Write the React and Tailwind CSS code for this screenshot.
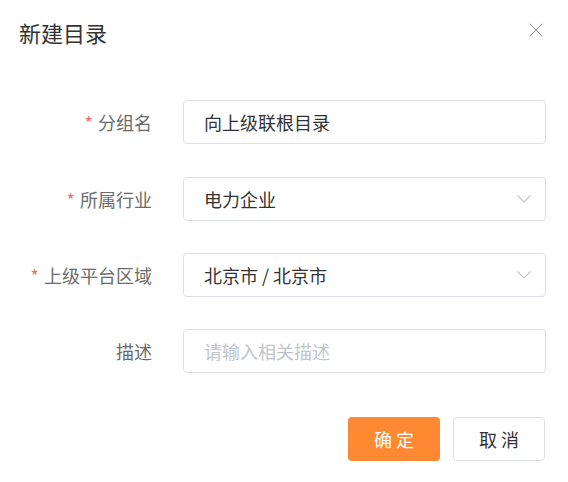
import { X } from "lucide-react";

const font = { fontFamily: '"Noto Sans CJK SC", "Noto Sans", sans-serif' };

function Row({ label, required, children }) {
  return (
    <div className="flex items-center">
      <label className="w-[183px] shrink-0 pr-[31px] text-right text-lg text-[#6b6b6b]">
        {required && <span className="mr-[5px] text-[#f56c6c]">*</span>}
        {label}
      </label>
      <div className="w-[363px]">{children}</div>
    </div>
  );
}

function Select({ value }) {
  return (
    <div className="flex h-11 items-center justify-between rounded border border-[#dcdfe6] bg-white pl-5 pr-[14px] text-lg text-[#333]">
      <span>{value}</span>
      <svg width="14" height="8" viewBox="0 0 14 8" fill="none" stroke="#c0c4cc" strokeWidth="1.1">
        <polyline points="0.5,0.5 7,7 13.5,0.5" />
      </svg>
    </div>
  );
}

export default function App() {
  return (
    <div className="h-[482px] w-[568px] bg-white" style={font}>
      <header className="flex items-start justify-between pl-[19px] pr-[20px] pt-[16px]">
        <h1 className="text-[22px] leading-[32px] text-[#333]">新建目录</h1>
        <X className="mt-[2px] h-6 w-6 text-[#909399]" strokeWidth={1} />
      </header>

      <form className="mt-[52px] flex flex-col gap-8">
        <div className="mb-[1px]">
          <Row label="分组名" required>
            <input
              type="text"
              defaultValue="向上级联根目录"
              className="h-11 w-full rounded border border-[#dcdfe6] px-5 text-lg text-[#333] outline-none"
            />
          </Row>
        </div>
        <Row label="所属行业" required>
          <Select value="电力企业" />
        </Row>
        <Row label="上级平台区域" required>
          <Select value="北京市 / 北京市" />
        </Row>
        <Row label="描述">
          <input
            type="text"
            placeholder="请输入相关描述"
            className="h-11 w-full rounded border border-[#dcdfe6] px-5 text-lg text-[#333] outline-none placeholder:text-[#c0c4cc]"
          />
        </Row>
      </form>

      <div className="mt-[44px] flex justify-end gap-[13px] pr-[23px]">
        <button className="h-11 w-[92px] rounded bg-[#ff8833] pl-[4px] text-lg tracking-[4px] text-white">确定</button>
        <button className="h-11 w-[92px] rounded border border-[#dcdfe6] bg-white pl-[4px] text-lg tracking-[4px] text-[#333]">取消</button>
      </div>
    </div>
  );
}
